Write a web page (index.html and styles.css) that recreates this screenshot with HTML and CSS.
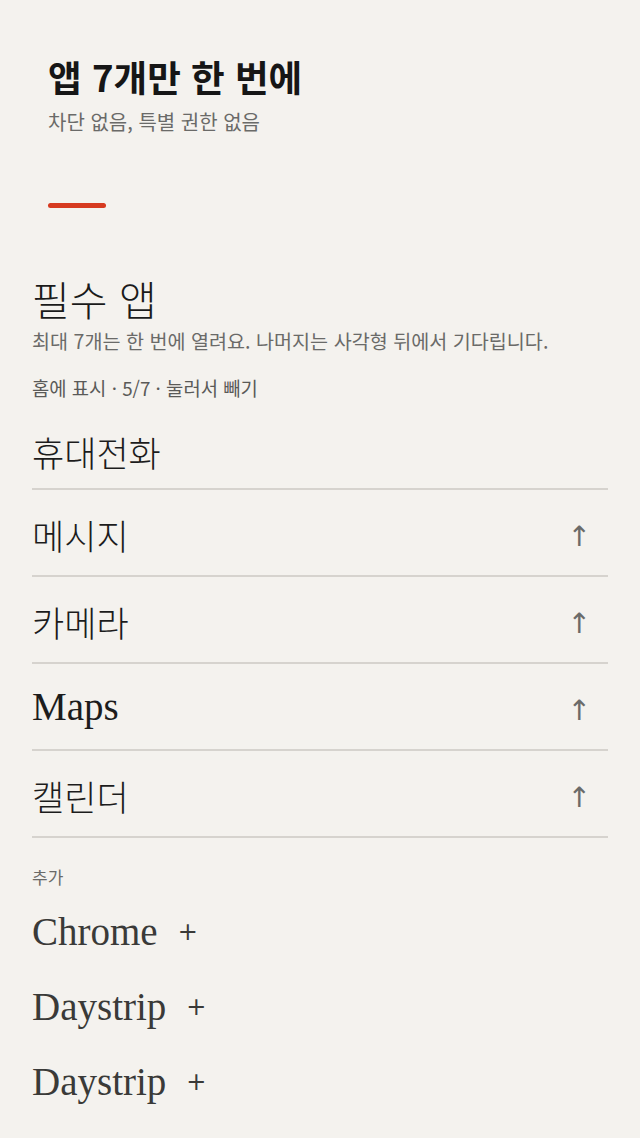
FILE: index.html
```html
<!DOCTYPE html>
<html lang="ko">
<head>
<meta charset="utf-8">
<link rel="stylesheet" href="styles.css">
</head>
<body>
<div class="page">
  <header class="hero">
    <h1 class="hero-title">앱 7개만 한 번에</h1>
    <p class="hero-sub">차단 없음, 특별 권한 없음</p>
    <div class="accent"></div>
  </header>
  <section class="section">
    <h2 class="section-title">필수 앱</h2>
    <p class="section-desc">최대 7개는 한 번에 열려요. 나머지는 사각형 뒤에서 기다립니다.</p>
    <p class="section-meta">홈에 표시 · 5/7 · 눌러서 빼기</p>
    <ul class="app-list">
      <li class="app-row first"><span class="app-name ko">휴대전화</span></li>
      <li class="app-row"><span class="app-name ko">메시지</span><span class="up">↑</span></li>
      <li class="app-row"><span class="app-name ko">카메라</span><span class="up">↑</span></li>
      <li class="app-row"><span class="app-name">Maps</span><span class="up">↑</span></li>
      <li class="app-row"><span class="app-name ko">캘린더</span><span class="up">↑</span></li>
    </ul>
    <p class="add-label">추가</p>
    <ul class="add-list">
      <li class="add-row"><span class="add-name">Chrome</span><span class="plus">+</span></li>
      <li class="add-row"><span class="add-name">Daystrip</span><span class="plus">+</span></li>
      <li class="add-row"><span class="add-name">Daystrip</span><span class="plus">+</span></li>
    </ul>
  </section>
</div>
</body>
</html>
```
FILE: styles.css
```css
html, body {
  margin: 0;
  padding: 0;
  background: #f4f2ee;
}
body {
  font-family: "Noto Sans CJK KR", "Noto Sans", sans-serif;
  color: #1a1a1a;
}
.page {
  width: 640px;
  height: 1138px;
  overflow: hidden;
}
.hero {
  padding: 51px 48px 0 48px;
}
.hero-title {
  margin: 0;
  font-size: 36.6px;
  font-weight: 700;
  line-height: 52px;
  color: #161616;
}
.hero-sub {
  margin: 5px 0 0 0;
  font-size: 20px;
  line-height: 28px;
  color: #6a6a68;
}
.accent {
  margin-top: 67px;
  width: 58px;
  height: 5px;
  border-radius: 3px;
  background: #d63a20;
}
.section {
  padding: 0 32px;
  margin-top: 62px;
}
.section-title {
  margin: 0;
  font-size: 41px;
  font-weight: 300;
  line-height: 56px;
  color: #1a1a1a;
}
.section-desc {
  margin: 2px 0 0 0;
  font-size: 19.6px;
  line-height: 26px;
  color: #6a6a68;
}
.section-meta {
  margin: 22px 0 10px 0;
  font-size: 18.8px;
  line-height: 24px;
  color: #5a5a58;
}
.app-list, .add-list {
  list-style: none;
  margin: 0;
  padding: 0;
}
.app-row {
  display: flex;
  align-items: center;
  justify-content: space-between;
  height: 85px;
  border-bottom: 2px solid #d6d3ce;
}
.app-row.first {
  height: 78px;
}
.app-name {
  font-family: "Liberation Serif", "Noto Sans CJK KR", serif;
  font-size: 39px;
  font-weight: 400;
  color: #1c1c1c;
}
.app-name.ko {
  font-family: "Noto Sans CJK KR", sans-serif;
  font-size: 35px;
  font-weight: 300;
  margin-top: 4px;
}
.up {
  font-family: "DejaVu Sans", sans-serif;
  font-size: 28px;
  color: #6b6b69;
  margin-right: 17px;
  margin-top: 8px;
}
.add-label {
  margin: 27px 0 5px 0;
  font-size: 17px;
  line-height: 24px;
  color: #6a6a68;
}
.add-row {
  display: flex;
  align-items: center;
  gap: 20px;
  height: 75px;
}
.add-name {
  font-family: "Liberation Serif", serif;
  font-size: 39px;
  color: #3a3a38;
}
.plus {
  font-family: "DejaVu Sans", sans-serif;
  font-size: 24px;
  color: #3a3a38;
}
```
